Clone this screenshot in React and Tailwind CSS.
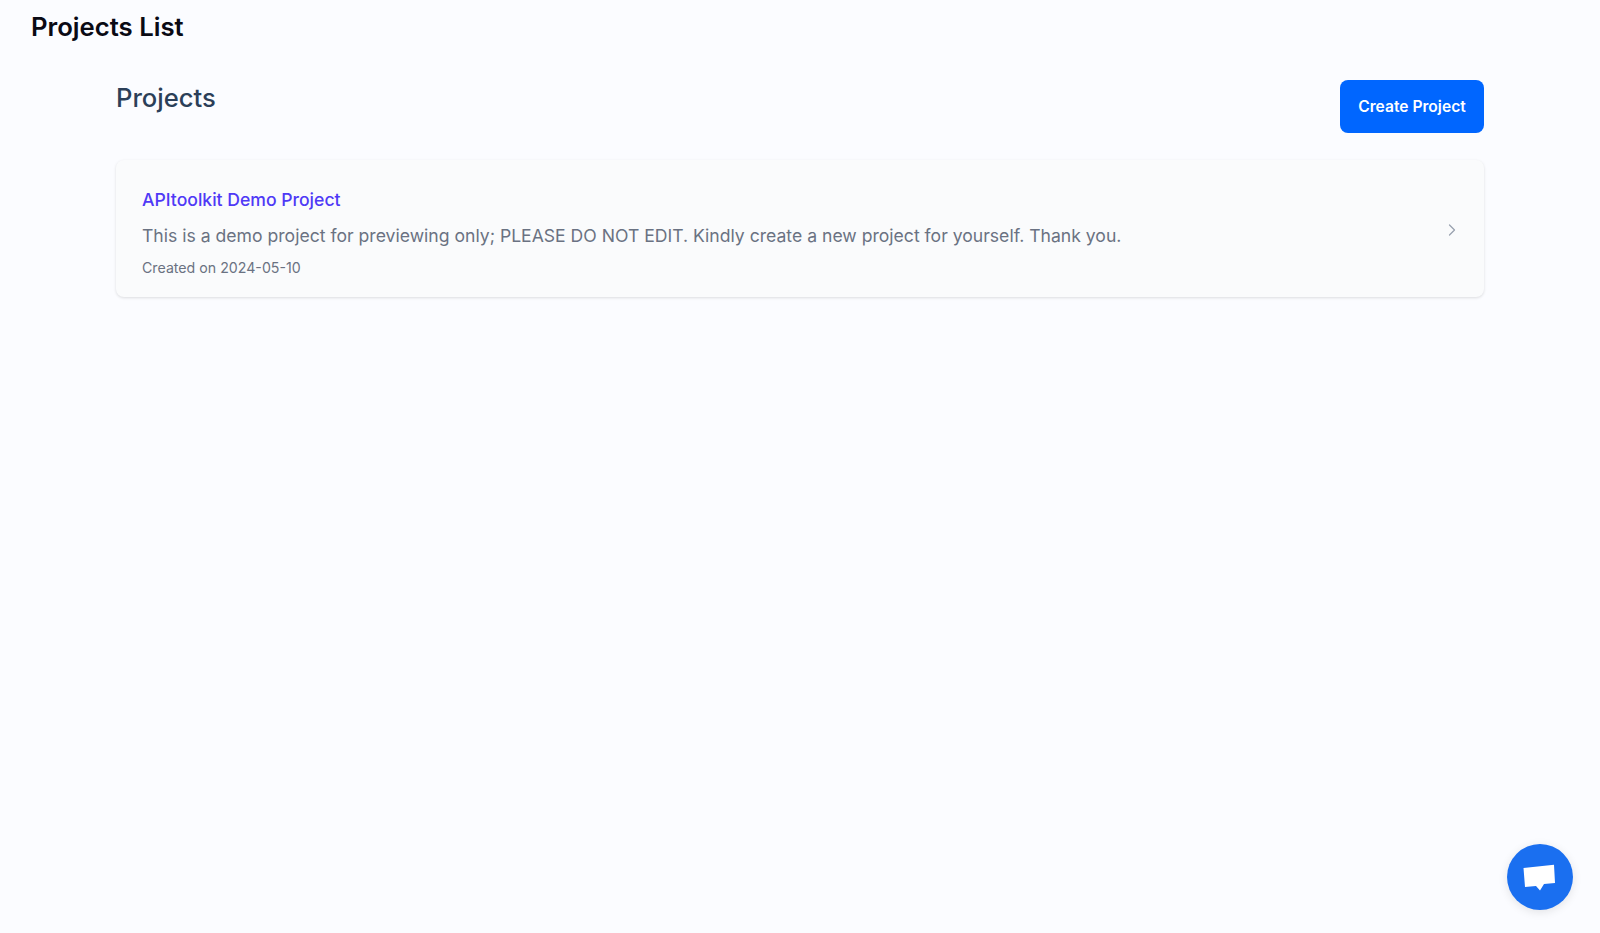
import React from 'react';
import { ChevronRight } from 'lucide-react';

const App = () => {
    return (
        <div className="min-h-[933px] bg-[#fbfcff] font-['Inter',sans-serif]">
            <div className="px-[31px] pt-[10px]">
                <h1 className="text-[25.7px] leading-[34px] font-semibold text-[#0a0a14]">Projects List</h1>
            </div>

            <main className="pl-[116px] pr-[116px] pt-[36px]">
                <div className="flex items-start justify-between">
                    <h2 className="text-[25.6px] leading-[36px] font-medium text-[#2b3f58]">Projects</h2>
                    <button className="h-[53px] w-[144px] rounded-lg bg-[#0066ff] text-[15.6px] font-semibold text-white">
                        Create Project
                    </button>
                </div>

                <div className="mt-[27px] flex h-[137px] items-center justify-between rounded-lg bg-[#fafbfc] pl-[26px] pr-[22px] shadow-[0_1px_3px_rgba(0,0,0,0.13)]">
                    <div className="pt-[6px]">
                        <div className="text-[17.6px] leading-7 font-medium text-[#4f39f6]">APItoolkit Demo Project</div>
                        <p className="mt-[8px] text-[17.6px] leading-7 text-[#6a7282]">
                            This is a demo project for previewing only; PLEASE DO NOT EDIT. Kindly create a new project for yourself. Thank you.
                        </p>
                        <div className="mt-[8px] text-[14.2px] leading-5 text-[#6a7282]">Created on 2024-05-10</div>
                    </div>
                    <ChevronRight size={20} strokeWidth={1.5} className="mt-[2px] text-[#99a1af]" />
                </div>
            </main>

            <button className="fixed left-[1507px] top-[844px] flex h-[66px] w-[66px] items-center justify-center rounded-full bg-[#1a6ff0] shadow-[0_2px_10px_rgba(0,0,0,0.1)]">
                <svg width="34" height="32" viewBox="0 0 34 32" fill="white">
                    <path d="M0.5 7 L31 3.7 L32 22 L21 23 L17 29.5 L13 25 L2 26 Z" />
                </svg>
            </button>
        </div>
    );
};

export default App;
